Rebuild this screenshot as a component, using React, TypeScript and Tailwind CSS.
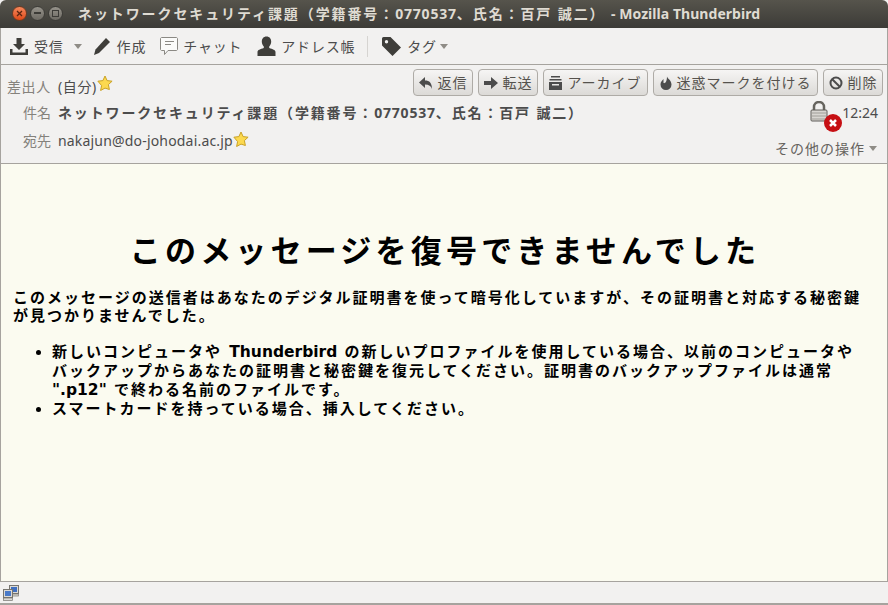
const ui = "font-['Noto_Sans','Noto_Sans_CJK_JP',sans-serif] [text-spacing-trim:space-all]";

function Star() {
  return (
    <svg width="16" height="16" viewBox="0 0 16 16" className="shrink-0">
      <path d="M8 1l2.100 4.600 5 .6-3.700 3.400 1 4.900L8 13.100l-4.400 2.400 1-4.900L.9 6.200l5-.6z" fill="#fcd94f" stroke="#c9a227" strokeWidth="1" strokeLinejoin="round" />
    </svg>
  );
}

function Caret() {
  return (
    <svg width="8" height="5" viewBox="0 0 8 5" className="shrink-0">
      <path d="M0 0h8L4 5z" fill="#8f8c86" />
    </svg>
  );
}

function Digits({ children }: { children: React.ReactNode }) {
  return <span className="tracking-[0.800px]">{children}</span>;
}

function BodyLatin({ children }: { children: React.ReactNode }) {
  return <span className="tracking-normal text-[15.500px]">{children}</span>;
}

function HeaderButton({ icon, label, w }: { icon: React.ReactNode; label: string; w: string }) {
  return (
    <div className={`${w} h-[27px] flex items-center justify-center gap-[5px] rounded-[4px] border border-[#aeaba6] bg-gradient-to-b from-[#f6f5f4] to-[#dcdad7] text-[14px] text-[#55524d] tracking-[1px]`}>
      {icon}
      <span>{label}</span>
    </div>
  );
}

export default function App() {
  return (
    <div className={`${ui} w-[888px] h-[605px] flex flex-col overflow-hidden bg-[#f2f1f0] text-[#4c4c4c]`}>
      {/* title bar */}
      <div className="h-[28px] shrink-0 flex items-center rounded-t-[6px] bg-gradient-to-b from-[#56544c] to-[#3c3b37] pl-[12px] pb-[2px]">
        <div className="flex items-center gap-[3px]">
          <div className="w-[15px] h-[15px] rounded-full bg-gradient-to-b from-[#f5875a] to-[#dd4814] border border-[#6e3a22] flex items-center justify-center">
            <svg width="7" height="7" viewBox="0 0 7 7"><path d="M1 1l5 5M6 1L1 6" stroke="#5a2510" strokeWidth="1.300" /></svg>
          </div>
          <div className="w-[15px] h-[15px] rounded-full bg-gradient-to-b from-[#95928a] to-[#6d6a63] border border-[#3c3b37] flex items-center justify-center">
            <div className="w-[7px] h-[1.500px] bg-[#3c3b37]" />
          </div>
          <div className="w-[15px] h-[15px] rounded-full bg-gradient-to-b from-[#95928a] to-[#6d6a63] border border-[#3c3b37] flex items-center justify-center">
            <div className="w-[7px] h-[7px] border border-[#3c3b37]" />
          </div>
        </div>
        <div className="ml-[15px] text-[14px] font-bold text-[#dfdbd2] whitespace-nowrap tracking-[1.900px]">
          ネットワークセキュリティ課題（学籍番号：<Digits>0770537</Digits>、氏名：百戸 誠二） <span className="tracking-[0.050px]">- Mozilla Thunderbird</span>
        </div>
      </div>

      {/* main toolbar */}
      <div className="h-[37px] shrink-0 flex items-center border-b border-[#a6a39e] pl-[9px] text-[14px] text-[#4c4c4c] tracking-[0.800px] border-l border-r">
        <div className="flex items-center gap-[6px]">
          <svg width="18" height="18" viewBox="0 0 18 18"><path d="M6.500 1h5v6h3.500L9 13 3 7h3.500zM0 12h2.500v3.500h13V12H18v6H0z" fill="#3f3e3a" /></svg>
          <span>受信</span>
        </div>
        <div className="ml-[10px]"><Caret /></div>
        <div className="ml-[11px] flex items-center gap-[6px]">
          <svg width="18" height="19" viewBox="0 0 18 19"><path d="M13 1l4 4L6 16l-5 2 1.500-5.500z" fill="#3f3e3a" /></svg>
          <span>作成</span>
        </div>
        <div className="ml-[13px] flex items-center gap-[4px]">
          <svg width="20" height="20" viewBox="0 0 20 20"><path d="M2.500 1.500h15a1.500 1.500 0 0 1 1 1v11a1.500 1.500 0 0 1-1 1H9l-3.500 4v-4h-3a1.500 1.500 0 0 1-1-1v-11a1.500 1.500 0 0 1 1-1z" fill="#fbfbfa" stroke="#8b8984" /><path d="M6 5.500h9M6 8.500h6" stroke="#8b8984" /></svg>
          <span>チャット</span>
        </div>
        <div className="ml-[15px] flex items-center gap-[5px]">
          <svg width="19" height="20" viewBox="0 0 19 20"><path d="M9.500 0.500c3 0 4.700 2.200 4.700 5 0 2-.8 3.800-2 5v1.500c3.500 1 6.300 2 6.300 4V20H.5v-4c0-2 2.800-3 6.300-4v-1.500c-1.200-1.200-2-3-2-5 0-2.800 1.700-5 4.700-5z" fill="#3f3e3a" /></svg>
          <span>アドレス帳</span>
        </div>
        <div className="ml-[12px] w-px h-[21px] bg-[#d6d4d1]" />
        <div className="ml-[14px] flex items-center gap-[6px]">
          <svg width="19" height="19" viewBox="0 0 19 19"><path fillRule="evenodd" d="M1.500 0h7L19 10.500 10.500 19 0 8.500V1.500A1.500 1.500 0 0 1 1.500 0zM4.500 3a1.700 1.700 0 1 0 0 3.400 1.700 1.700 0 0 0 0-3.400z" fill="#3f3e3a" /></svg>
          <span>タグ</span>
          <div className="-ml-[3px]"><Caret /></div>
        </div>
      </div>

      {/* message header */}
      <div className="h-[99px] shrink-0 flex flex-col border-b border-[#a6a39e] border-l border-r text-[14px]">
        <div className="h-[32px] flex items-start pt-[4px] pr-[4px]">
          <div className="w-[52px] pt-[7px] pl-[6px] text-[#85827c] whitespace-nowrap tracking-[0.600px]">差出人</div>
          <div className="ml-[5px] pt-[7px] whitespace-nowrap tracking-[0.600px]">(自分)</div>
          <div className="pt-[6px]"><Star /></div>
          <div className="ml-auto flex gap-[5px]">
            <HeaderButton w="w-[60px]" label="返信" icon={<svg width="14" height="14" viewBox="0 0 14 14"><path d="M6 1v3.500c4.500 0 7 2.500 7 8.500-1-3-3-4.500-7-4.500V12L0 6.500z" fill="#4c4c4c" /></svg>} />
            <HeaderButton w="w-[60px]" label="転送" icon={<svg width="14" height="12" viewBox="0 0 14 12"><path d="M0 4h7V0l7 6-7 6V8H0z" fill="#4c4c4c" /></svg>} />
            <HeaderButton w="w-[105px]" label="アーカイブ" icon={<svg width="13" height="14" viewBox="0 0 13 14"><path d="M2 0h9v1.500H2zM0.500 3h12v1.500H.5zM0 6h13v8H0zM3 8v1.500h7V8z" fill="#4c4c4c" fillRule="evenodd" /></svg>} />
            <HeaderButton w="w-[165px]" label="迷惑マークを付ける" icon={<svg width="12" height="14" viewBox="0 0 12 14"><path d="M7 0c-.500 2 4.500 4 4.500 8.500A5.500 5.500 0 0 1 .5 8.500C.5 6 2 4.500 3.500 3v4c1 .5 3.500 0 3.500-7z" fill="#4c4c4c" /></svg>} />
            <HeaderButton w="w-[60px]" label="削除" icon={<svg width="14" height="14" viewBox="0 0 14 14"><circle cx="7" cy="7" r="5.500" fill="none" stroke="#4c4c4c" strokeWidth="2" /><path d="M3.200 3.200l7.600 7.600" stroke="#4c4c4c" strokeWidth="2" /></svg>} />
          </div>
        </div>
        <div className="h-[30px] flex items-center pr-[9px]">
          <div className="w-[52px] pl-[22px] text-[#85827c] whitespace-nowrap">件名</div>
          <div className="ml-[5px] font-bold text-[#4c4c4c] whitespace-nowrap tracking-[1.850px]">ネットワークセキュリティ課題（学籍番号：<Digits>0770537</Digits>、氏名：百戸 誠二）</div>
          <div className="ml-auto relative w-[22px] h-[26px] mr-[10px]">
            <svg width="18" height="21" viewBox="0 0 18 21" className="absolute left-0 top-[2px]">
              <path d="M4 10V6a5 5 0 0 1 10 0v4" fill="none" stroke="#66645e" strokeWidth="2.500" />
              <rect x="1" y="9" width="16" height="11" rx="1" fill="#d8d6d1" stroke="#5f5d58" />
              <path d="M2 12h14M2 15h14M2 18h14" stroke="#a09e98" />
            </svg>
            <div className="absolute left-[14px] top-[15px] w-[18px] h-[18px] rounded-full bg-[#c60f13] flex items-center justify-center">
              <svg width="10" height="10" viewBox="0 0 10 10"><path d="M2 2l6 6M8 2l-6 6" stroke="#fff" strokeWidth="2.500" /></svg>
            </div>
          </div>
          <div className="whitespace-nowrap text-[#4c4c4c]">12:24</div>
        </div>
        <div className="flex-1 flex items-start pr-[10px]">
          <div className="w-[52px] pl-[22px] pt-[3px] text-[#85827c] whitespace-nowrap">宛先</div>
          <div className="ml-[5px] pt-[3px] whitespace-nowrap tracking-[0.180px]">nakajun@do-johodai.ac.jp</div>
          <div className="pt-[4px]"><Star /></div>
          <div className="ml-auto mt-[11px] flex items-center gap-[4px] whitespace-nowrap text-[#66635e] tracking-[1px]">
            <span>その他の操作</span>
            <Caret />
          </div>
        </div>
      </div>

      {/* message body */}
      <div className="flex-1 bg-[#fbfbf0] border-l border-r border-[#a6a39e] pl-[12px] pr-[14px] font-['DejaVu_Sans','Noto_Sans_CJK_JP',sans-serif] font-bold text-black">
        <h1 className="mt-[65px] pl-[4px] text-center text-[31px] leading-[44px] tracking-[4.200px]">このメッセージを復号できませんでした</h1>
        <p className="mt-[16px] text-[15px] leading-[18px] tracking-[2px]">
          このメッセージの送信者はあなたのデジタル証明書を使って暗号化していますが、その証明書と対応する秘密鍵が見つかりませんでした。
        </p>
        <ul className="mt-[18px] pl-[39px] pr-[13px] list-disc text-[15px] leading-[19px] tracking-[2px]">
          <li>新しいコンピュータや <BodyLatin>Thunderbird</BodyLatin> の新しいプロファイルを使用している場合、以前のコンピュータやバックアップからあなたの証明書と秘密鍵を復元してください。証明書のバックアップファイルは通常 <BodyLatin>".p12"</BodyLatin> で終わる名前のファイルです。</li>
          <li>スマートカードを持っている場合、挿入してください。</li>
        </ul>
      </div>

      {/* status bar */}
      <div className="h-[24px] shrink-0 flex items-center border-t border-b-2 border-[#a6a39e] pl-[3px]">
        <svg width="17" height="16" viewBox="0 0 17 16">
          <rect x="6.500" y="0.500" width="9" height="8" fill="#dcdad6" stroke="#77756f" />
          <rect x="8" y="2" width="6" height="5" fill="#3f6fc0" />
          <rect x="9.500" y="9" width="6" height="2" fill="#dcdad6" stroke="#77756f" strokeWidth="0.700" />
          <rect x="0.500" y="4.500" width="9" height="8" fill="#dcdad6" stroke="#77756f" />
          <rect x="2" y="6" width="6" height="5" fill="#4a7ac8" />
          <rect x="0.500" y="13" width="9" height="2.500" fill="#dcdad6" stroke="#77756f" strokeWidth="0.700" />
        </svg>
      </div>
    </div>
  );
}
